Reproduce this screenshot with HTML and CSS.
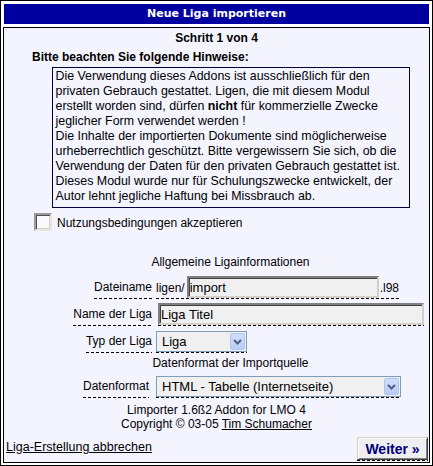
FILE: index.html
```html
<!DOCTYPE html>
<html lang="de">
<head>
<meta charset="utf-8">
<title>Neue Liga importieren</title>
<link rel="stylesheet" href="styles.css">
</head>
<body>
<div class="frame">
  <div class="head">Neue Liga importieren</div>
  <div class="box">
    <div class="step">Schritt 1 von 4</div>
    <div class="section">
      <div class="hint-title">Bitte beachten Sie folgende Hinweise:</div>
      <div class="notice">Die Verwendung dieses Addons ist ausschließlich für den<br>privaten Gebrauch gestattet. Ligen, die mit diesem Modul<br>erstellt worden sind, dürfen <b>nicht</b> für kommerzielle Zwecke<br>jeglicher Form verwendet werden !<br>Die Inhalte der importierten Dokumente sind möglicherweise<br>urheberrechtlich geschützt. Bitte vergewissern Sie sich, ob die<br>Verwendung der Daten für den privaten Gebrauch gestattet ist.<br>Dieses Modul wurde nur für Schulungszwecke entwickelt, der<br>Autor lehnt jegliche Haftung bei Missbrauch ab.</div>
      <label class="accept"><input type="checkbox" class="check"><span class="accept-label">Nutzungsbedingungen akzeptieren</span></label>
      <div class="group-title">Allgemeine Ligainformationen</div>
      <div class="row r1">
        <div class="lbl-cell"><span class="lbl dash">Dateiname</span></div>
        <div class="fld dash"><span class="small">ligen/</span><input class="input w-file" type="text" value="import"><span class="small suffix">.l98</span></div>
      </div>
      <div class="row r2">
        <div class="lbl-cell"><span class="lbl dash">Name der Liga</span></div>
        <div class="fld dash fld-name"><input class="input w-name" type="text" value="Liga Titel"></div>
      </div>
      <div class="row r3">
        <div class="lbl-cell"><span class="lbl dash">Typ der Liga</span></div>
        <div class="fld dash"><div class="select w-typ"><span class="sel-text">Liga</span><span class="arrow"><svg width="9" height="6" viewBox="0 0 9 6"><path d="M1 1 L4.5 4.5 L8 1" fill="none" stroke="#4d6185" stroke-width="2"/></svg></span></div></div>
      </div>
      <div class="group-title g2">Datenformat der Importquelle</div>
      <div class="row r4">
        <div class="lbl-cell lbl-fmt"><span class="lbl dash">Datenformat</span></div>
        <div class="fld dash"><div class="select w-fmt"><span class="sel-text">HTML - Tabelle (Internetseite)</span><span class="arrow"><svg width="9" height="6" viewBox="0 0 9 6"><path d="M1 1 L4.5 4.5 L8 1" fill="none" stroke="#4d6185" stroke-width="2"/></svg></span></div></div>
      </div>
    </div>
    <div class="credits">Limporter 1.6ß2 Addon for LMO 4<br>Copyright © 03-05 <a href="#" class="plain-link">Tim Schumacher</a></div>
    <div class="actions">
      <a href="#" class="plain-link cancel">Liga-Erstellung abbrechen</a>
      <span class="btn-wrap dash"><button class="btn" type="button">Weiter »</button></span>
    </div>
  </div>
</div>
</body>
</html>
```
FILE: styles.css
```css
html, body {
  margin: 0;
  background: #fff;
}
body {
  font-family: "Liberation Sans", Arial, sans-serif;
  font-size: 12px;
  color: #000;
}
.frame {
  width: 433px;
  height: 466px;
  box-sizing: border-box;
  border: 1px solid #000;
  padding: 2px;
  display: flex;
  flex-direction: column;
  gap: 2px;
}
.head {
  margin: 1px;
  height: 20px;
  background: #0000a0;
  color: #fff;
  font: bold 11px/20px "DejaVu Sans", Verdana, sans-serif;
  text-align: center;
}
.box {
  flex: 1;
  border: 1px solid #000;
  background: #f4f4ff;
  display: flex;
  flex-direction: column;
}
.step {
  font-weight: bold;
  line-height: 15px;
  text-align: center;
  margin-top: 3px;
}
.section {
  padding-left: 28px;
}
.hint-title {
  font-weight: bold;
  line-height: 15px;
  margin-top: 4px;
}
.notice {
  width: 350px;
  margin: 2px auto 0;
  border: 1px solid #000040;
  padding: 1px 3px 3px;
  font-size: 12.4px;
  line-height: 15px;
  white-space: nowrap;
}
.accept {
  display: flex;
  align-items: flex-end;
  margin-top: 5px;
  padding-left: 2px;
}
.check {
  appearance: none;
  -webkit-appearance: none;
  margin: 0;
  width: 18px;
  height: 18px;
  box-sizing: border-box;
  border: 2px solid;
  border-color: #9a9a9a #e6e6e6 #e6e6e6 #9a9a9a;
  background: #fafafa;
  box-shadow: inset 1px 1px 0 #505050, inset -1px -1px 0 #d4d0c8;
}
.accept-label {
  margin-left: 5px;
  line-height: 15px;
}
.group-title {
  text-align: center;
  line-height: 15px;
  margin-top: 24px;
}
.group-title.g2 {
  margin-top: 3px;
}
.dash {
  background: repeating-linear-gradient(90deg, #000 0 3px, transparent 3px 5px) left bottom / 100% 1px no-repeat;
  padding-bottom: 1px;
}
.row {
  display: flex;
  align-items: flex-end;
}
.r1 { margin-top: 6px; }
.r2 { margin-top: 4px; }
.r3 { margin-top: 5px; }
.r4 { margin-top: 5px; }
.lbl-cell {
  width: 120px;
  text-align: right;
}
.lbl-fmt {
  width: 117px;
  margin-right: 3px;
}
.lbl {
  display: inline-block;
  line-height: 15px;
  padding-bottom: 4px;
}
.fld {
  margin-left: 4px;
  display: flex;
  align-items: baseline;
}
.fld-name {
  margin-left: 6px;
}
.small {
  font-size: 12px;
  line-height: 15px;
}
.suffix {
  margin-left: 1px;
}
.input {
  box-sizing: border-box;
  height: 22px;
  margin: 0;
  padding: 1px 1px;
  border: 2px solid;
  border-color: #808080 #d4d0c8 #d4d0c8 #808080;
  box-shadow: inset 1px 1px 0 #404040;
  background: #f0f0f0;
  font: 13px/16px "Liberation Sans", Arial, sans-serif;
  color: #000;
  outline: none;
}
.w-file {
  width: 192px;
  margin-left: 2px;
}
.w-name {
  width: 266px;
}
.select {
  box-sizing: border-box;
  height: 21px;
  border: 1px solid #7f9db9;
  background: #f0f0f0;
  display: flex;
  align-items: center;
  padding-left: 5px;
  font-size: 13px;
  line-height: 15px;
}
.w-typ { width: 91px; }
.w-fmt { width: 245px; }
.sel-text {
  white-space: nowrap;
}
.arrow {
  margin-left: auto;
  margin-right: 1px;
  width: 15px;
  height: 17px;
  box-sizing: border-box;
  border: 1px solid #b4c6f0;
  border-radius: 2px;
  background: linear-gradient(#d0defd, #b9cbf7);
  display: flex;
  align-items: center;
  justify-content: center;
}
.credits {
  text-align: center;
  line-height: 14px;
  margin-top: 5px;
}
.plain-link {
  color: #000;
  text-decoration: underline;
}
.actions {
  margin-top: auto;
  display: flex;
  justify-content: space-between;
  align-items: flex-end;
  padding: 0 1px 1px 2px;
}
.cancel {
  font-size: 12.5px;
  line-height: 15px;
  margin-bottom: 6px;
}
.btn-wrap {
  display: block;
}
.btn {
  display: block;
  width: 71px;
  height: 23px;
  margin: 0;
  padding: 0;
  box-sizing: border-box;
  border: 1px solid;
  border-color: #d4d0c8 #404040 #404040 #d4d0c8;
  box-shadow: inset 1px 1px 0 #fff, inset -1px -1px 0 #808080;
  background: #efefef;
  color: #00007b;
  font: bold 14px/20px "Liberation Sans", Arial, sans-serif;
  text-align: center;
}
```
